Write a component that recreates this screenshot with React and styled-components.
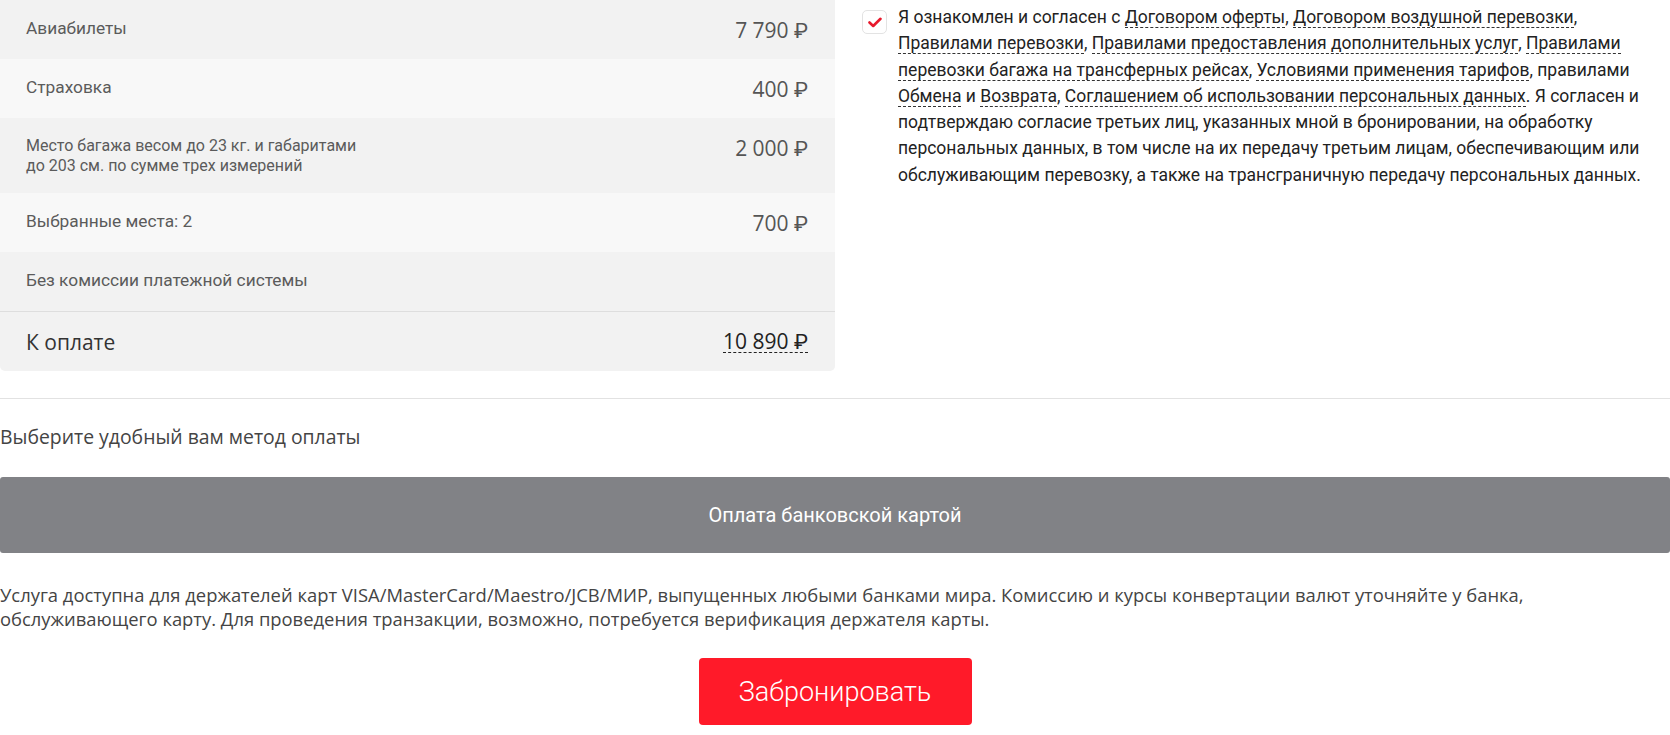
import React, { useState } from 'react';
import styled, { createGlobalStyle } from 'styled-components';

const GlobalStyle = createGlobalStyle`
  body {
    margin: 0;
    background: #fff;
    font-family: Roboto, "Liberation Sans", sans-serif;
    color: #333;
  }
`;

const Page = styled.div`
  width: 1670px;
`;

const TopSection = styled.div`
  display: flex;
  align-items: flex-start;
`;

const PriceCard = styled.div`
  width: 835px;
  flex-shrink: 0;
  border-radius: 0 0 5px 5px;
  overflow: hidden;
`;

const PriceRow = styled.div`
  display: flex;
  justify-content: space-between;
  align-items: flex-start;
  min-height: 24px;
  padding: 18px 27px 17px 26px;
  background: ${(p) => (p.$light ? '#f8f8f8' : '#f2f2f2')};
  border-top: ${(p) => (p.$divided ? '1px solid #dedede' : 'none')};
`;

const RowLabel = styled.div`
  font-size: ${(p) => (p.$small ? '16px' : '17.3px')};
  line-height: 20px;
  color: #5b5b5b;
`;

const RowPrice = styled.div`
  font-family: "Open Sans", Roboto, sans-serif;
  font-size: 21px;
  line-height: 24px;
  color: #555;
  white-space: nowrap;
`;

const TotalLabel = styled.div`
  font-family: "Open Sans", Roboto, sans-serif;
  font-size: 21px;
  line-height: 24px;
  color: #333;
`;

const TotalPrice = styled.div`
  font-family: "Open Sans", Roboto, sans-serif;
  font-size: 21px;
  line-height: 22px;
  color: #222;
  border-bottom: 1px dashed #222;
  white-space: nowrap;
`;

const AgreementBlock = styled.label`
  flex: 1;
  display: flex;
  align-items: flex-start;
  gap: 11px;
  padding: 4px 14px 0 27px;
  cursor: pointer;
`;

const CheckBox = styled.span`
  width: 25px;
  height: 24px;
  flex-shrink: 0;
  box-sizing: border-box;
  border: 1px solid #e3e3e3;
  border-radius: 5px;
  background: #fff;
  display: flex;
  align-items: center;
  justify-content: center;
  margin-top: 6px;
`;

const AgreementText = styled.div`
  font-size: 17.5px;
  line-height: 26.3px;
  color: #222;
`;

const DocLink = styled.span`
  border-bottom: 1px dashed #333;
`;

const Divider = styled.hr`
  border: none;
  border-top: 1px solid #e2e2e2;
  margin: 27px 0 0;
`;

const SectionTitle = styled.div`
  font-family: "Open Sans", Roboto, sans-serif;
  font-size: 19.4px;
  line-height: 24px;
  color: #444;
  margin: 26px 0 28px;
`;

const MethodButton = styled.button`
  display: block;
  width: 100%;
  height: 76px;
  border: none;
  border-radius: 3px;
  background: #818286;
  color: #fff;
  font-family: Roboto, sans-serif;
  font-size: 20px;
  cursor: pointer;
`;

const Note = styled.p`
  margin: 30px 0 0;
  font-family: "Open Sans", Roboto, sans-serif;
  font-size: 18.4px;
  line-height: 24px;
  color: #444;
`;

const BookRow = styled.div`
  display: flex;
  justify-content: center;
  padding-top: 27px;
`;

const BookButton = styled.button`
  width: 273px;
  height: 67px;
  border: none;
  border-radius: 4px;
  background: #ff1a29;
  color: #fff;
  font-family: Roboto, sans-serif;
  font-size: 27px;
  font-weight: 300;
  cursor: pointer;
`;

const items = [
  { label: 'Авиабилеты', price: '7 790 ₽' },
  { label: 'Страховка', price: '400 ₽' },
  {
    label: ['Место багажа весом до 23 кг. и габаритами', 'до 203 см. по сумме трех измерений'],
    price: '2 000 ₽',
  },
  { label: 'Выбранные места: 2', price: '700 ₽' },
  { label: 'Без комиссии платежной системы' },
];

const CheckMark = () => (
  <svg width="14" height="11" viewBox="0 0 14 11">
    <path d="M1.5 5.5 L5.2 9 L12.5 1.8" fill="none" stroke="#e8192c" strokeWidth="2.6" strokeLinecap="round" strokeLinejoin="round" />
  </svg>
);

const App = () => {
  const [agreed, setAgreed] = useState(true);

  return (
    <Page>
      <GlobalStyle />
      <TopSection>
        <PriceCard>
          {items.map((item, i) => (
            <PriceRow key={i} $light={i % 2 === 1}>
              <RowLabel $small={Array.isArray(item.label)}>
                {Array.isArray(item.label)
                  ? item.label.map((line) => <div key={line}>{line}</div>)
                  : item.label}
              </RowLabel>
              {item.price && <RowPrice>{item.price}</RowPrice>}
            </PriceRow>
          ))}
          <PriceRow $divided>
            <TotalLabel>К оплате</TotalLabel>
            <TotalPrice>10 890 ₽</TotalPrice>
          </PriceRow>
        </PriceCard>

        <AgreementBlock onClick={() => setAgreed(!agreed)}>
          <CheckBox>{agreed && <CheckMark />}</CheckBox>
          <AgreementText>
            Я ознакомлен и согласен с <DocLink>Договором оферты</DocLink>,{' '}
            <DocLink>Договором воздушной перевозки</DocLink>,{' '}
            <DocLink>Правилами перевозки</DocLink>,{' '}
            <DocLink>Правилами предоставления дополнительных услуг</DocLink>,{' '}
            <DocLink>Правилами перевозки багажа на трансферных рейсах</DocLink>,{' '}
            <DocLink>Условиями применения тарифов</DocLink>, правилами{' '}
            <DocLink>Обмена</DocLink> и <DocLink>Возврата</DocLink>,{' '}
            <DocLink>Соглашением об использовании персональных данных</DocLink>. Я согласен и
            подтверждаю согласие третьих лиц, указанных мной в бронировании, на обработку
            персональных данных, в том числе на их передачу третьим лицам, обеспечивающим или
            обслуживающим перевозку, а также на трансграничную передачу персональных данных.
          </AgreementText>
        </AgreementBlock>
      </TopSection>

      <Divider />
      <SectionTitle>Выберите удобный вам метод оплаты</SectionTitle>
      <MethodButton>Оплата банковской картой</MethodButton>
      <Note>
        Услуга доступна для держателей карт VISA/MasterCard/Maestro/JCB/МИР, выпущенных любыми
        банками мира. Комиссию и курсы конвертации валют уточняйте у банка,
        <br />
        обслуживающего карту. Для проведения транзакции, возможно, потребуется верификация
        держателя карты.
      </Note>
      <BookRow>
        <BookButton>Забронировать</BookButton>
      </BookRow>
    </Page>
  );
};

export default App;
